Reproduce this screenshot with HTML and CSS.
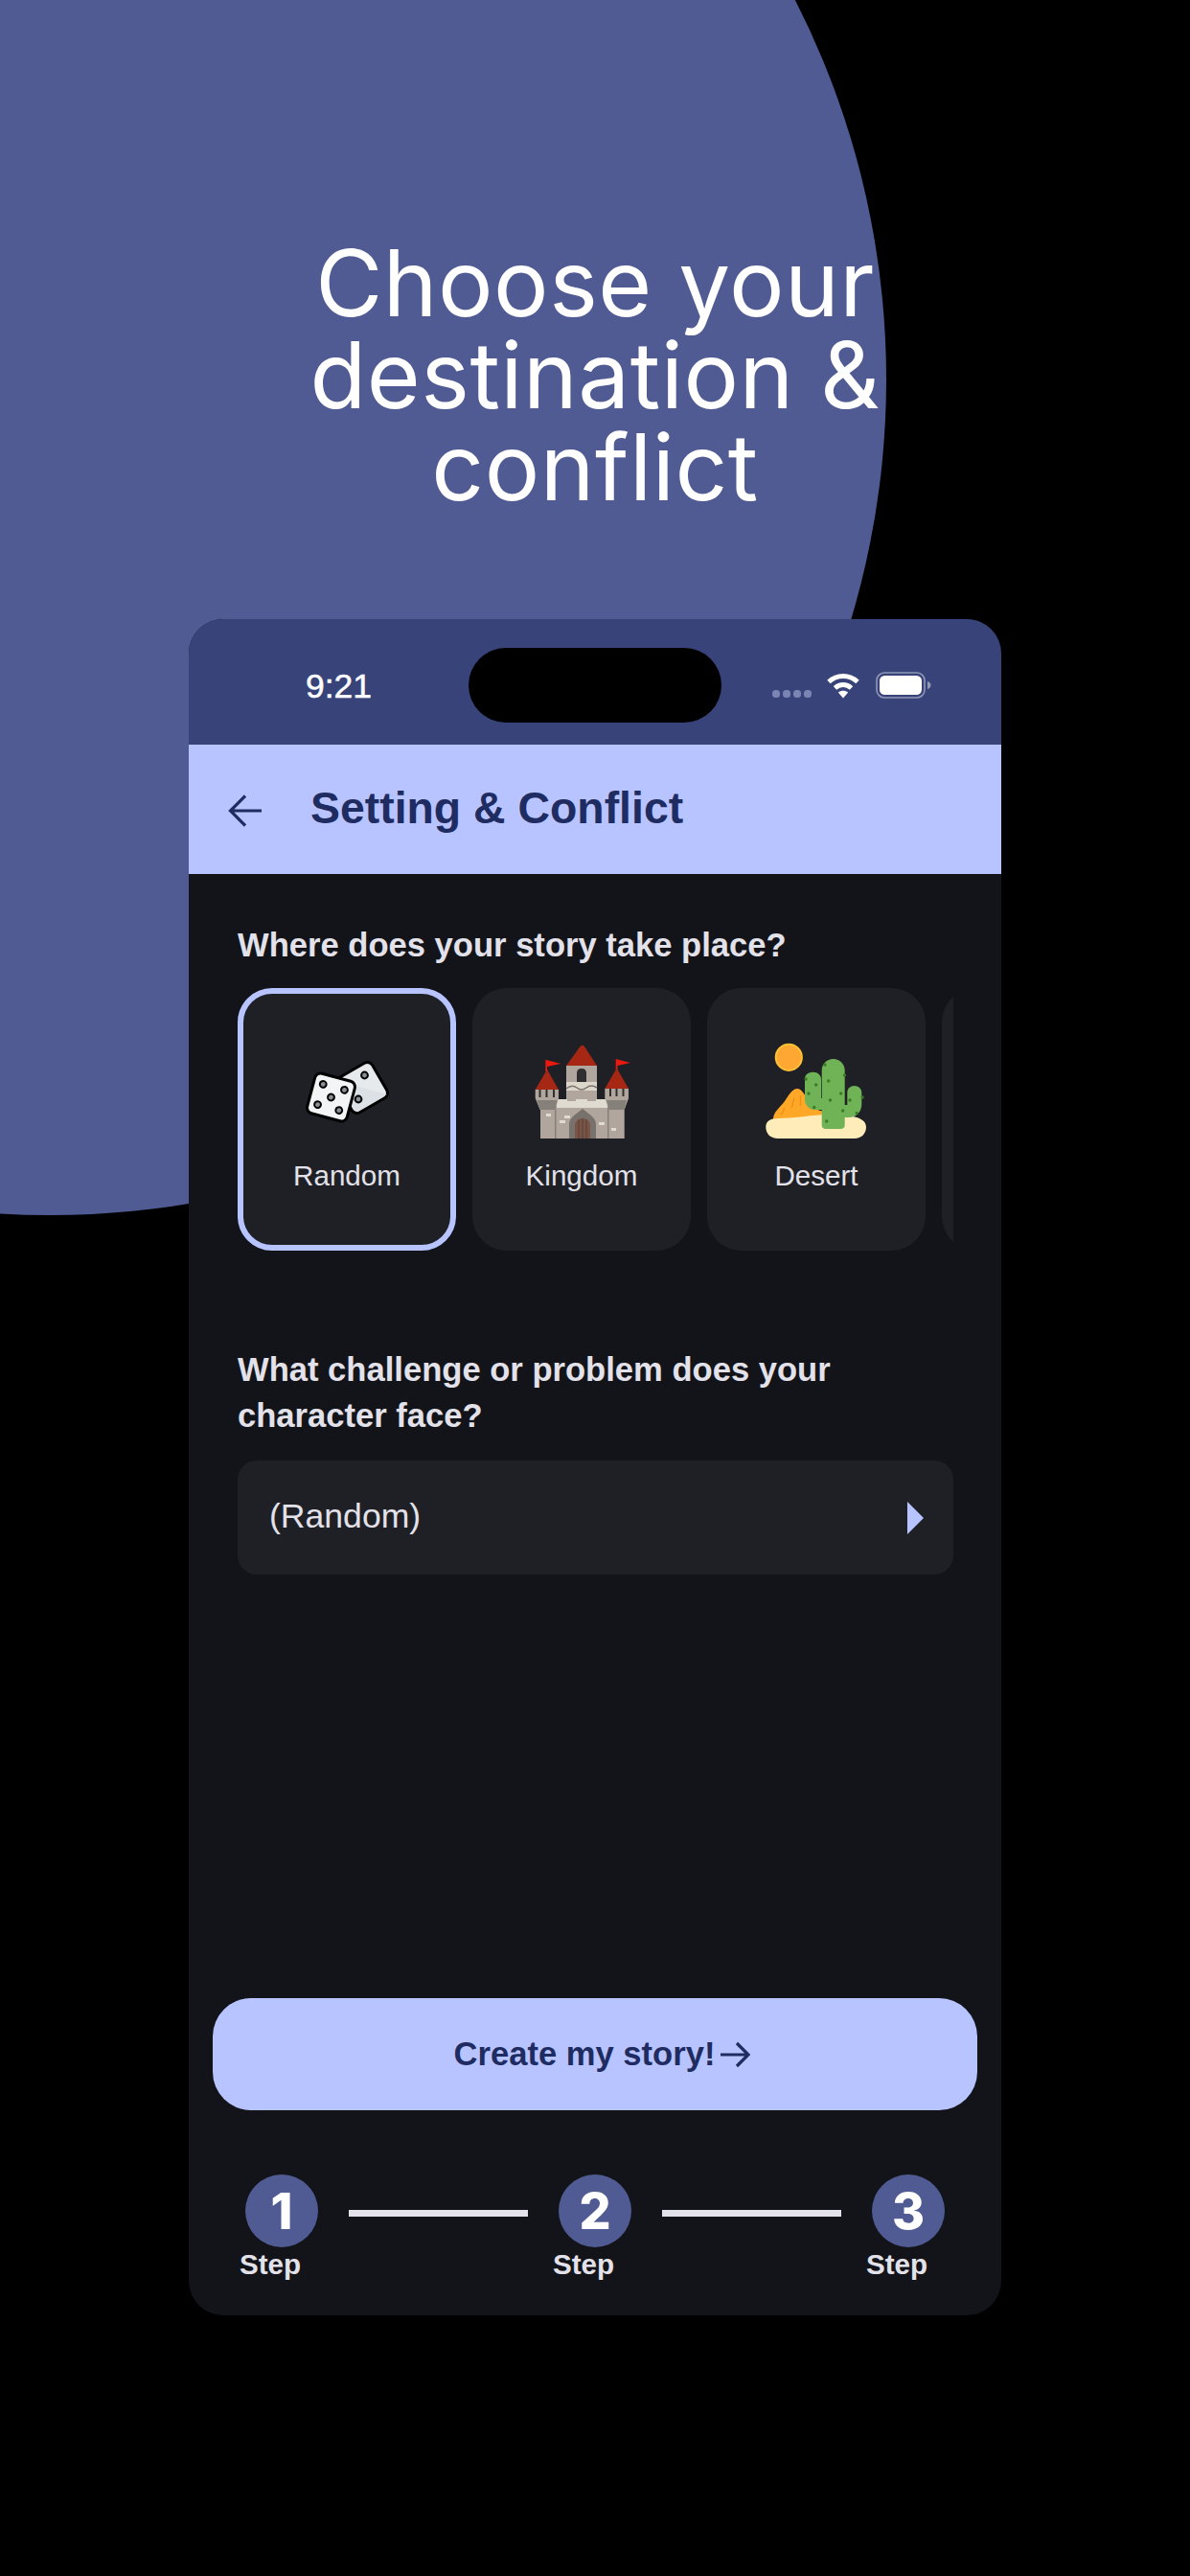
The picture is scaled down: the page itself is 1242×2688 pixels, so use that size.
FILE: index.html
```html
<!DOCTYPE html>
<html lang="en">
<head>
    <meta charset="UTF-8">
    <meta name="viewport" content="width=device-width, initial-scale=1.0">
    <title>Setting & Conflict</title>
    <link rel="stylesheet" href="styles.css">
</head>
<body>

<div class="blob"></div>

<div class="hero">
    <h1>Choose your<br>destination &amp;<br>conflict</h1>
</div>

<div class="phone">
    <div class="status">
        <span class="time">9:21</span>
        <div class="island"></div>
        <div class="status-icons">
            <svg class="dots" width="41" height="8" viewBox="0 0 41 8">
                <rect x="0" y="0" width="8" height="8" rx="3.5"/>
                <rect x="11" y="0" width="8" height="8" rx="3.5"/>
                <rect x="22" y="0" width="8" height="8" rx="3.5"/>
                <rect x="33" y="0" width="8" height="8" rx="3.5"/>
            </svg>
            <svg class="wifi" width="36" height="28" viewBox="0 0 36 28">
                <path d="M3 10.5C11.5 2.5 24.5 2.5 33 10.5" fill="none" stroke="#fff" stroke-width="5"/>
                <path d="M9.5 17C14.5 12.4 21.5 12.4 26.5 17" fill="none" stroke="#fff" stroke-width="5"/>
                <path d="M12.8 21.6C15.8 19.2 20.2 19.2 23.2 21.6L18 27.6Z" fill="#fff"/>
            </svg>
            <svg class="battery" width="58" height="28" viewBox="0 0 58 28">
                <rect x="1" y="1" width="50" height="26" rx="8" fill="none" stroke="#fff" stroke-opacity="0.45" stroke-width="1.6"/>
                <rect x="4" y="4" width="44" height="20" rx="5.5" fill="#fff"/>
                <path d="M54 10C56 10.5 57.5 12 57.5 14C57.5 16 56 17.5 54 18Z" fill="#fff" fill-opacity="0.45"/>
            </svg>
        </div>
    </div>

    <div class="topbar">
        <svg class="back" width="36" height="36" viewBox="0 0 36 36">
            <path d="M35 18H3M18 2.5L2.5 18L18 33.5" fill="none" stroke="#1f2c61" stroke-width="3.2"/>
        </svg>
        <h2>Setting &amp; Conflict</h2>
    </div>

    <div class="content">
        <p class="label">Where does your story take place?</p>
        <div class="places">
            <div class="place selected">
                <svg class="place-icon" width="120" height="120" viewBox="0 0 120 120">
                    <g transform="rotate(-30 76 55)">
                        <rect x="55" y="34" width="42" height="42" rx="6" fill="#e6eaed" stroke="#000" stroke-width="3"/>
                        <path d="M57 36L95 74H63Q57 74 57 68Z" fill="#d3dade" opacity="0.6"/>
                    </g>
                    <circle cx="78.5" cy="42" r="3.4" fill="#8a8f96" stroke="#000" stroke-width="2"/>
                    <circle cx="72" cy="67" r="3.4" fill="#8a8f96" stroke="#000" stroke-width="2"/>
                    <g transform="rotate(15 43.5 65)">
                        <rect x="22" y="43.5" width="43" height="43" rx="6" fill="#f3f4f5" stroke="#000" stroke-width="3"/>
                        <circle cx="32" cy="54" r="3.4" fill="#8a8f96" stroke="#000" stroke-width="2"/>
                        <circle cx="55" cy="54" r="3.4" fill="#8a8f96" stroke="#000" stroke-width="2"/>
                        <circle cx="43.5" cy="65" r="3.4" fill="#8a8f96" stroke="#000" stroke-width="2"/>
                        <circle cx="32" cy="76" r="3.4" fill="#8a8f96" stroke="#000" stroke-width="2"/>
                        <circle cx="55" cy="76" r="3.4" fill="#8a8f96" stroke="#000" stroke-width="2"/>
                    </g>
                </svg>
                <span>Random</span>
            </div>
            <div class="place">
                <svg class="place-icon" width="120" height="120" viewBox="0 0 120 120">
                    <rect x="44" y="32" width="32" height="40" fill="#b0a69e"/>
                    <path d="M44 32L58.5 12Q60.7 9.5 63 12L76 32Z" fill="#a52714"/>
                    <path d="M55 49V40Q55 35 60 35Q65 35 65 40V49Z" fill="#2f2f2f"/>
                    <path d="M44 49H76V58H44Z" fill="#dcd6cb"/>
                    <path d="M44 56Q50 51 55 55T65 55T76 55" fill="none" stroke="#7d7670" stroke-width="1.6"/>
                    <path d="M17 70H104.7V108H17Z" fill="#b0a69e"/>
                    <path d="M32 68H33.5V108H32ZM87 68H88.5V108H87Z" fill="#858079"/>
                    <path d="M34 67H45V69H54V67H66V69H75V67H87V76H34Z" fill="#e0dbd0"/>
                    <path d="M47 108V93C47 86 55 82 61 77C67 82 75 86 75 93V108Z" fill="#78716c"/>
                    <path d="M53 108V94C53 90 57 87 61 87C65 87 69 90 69 94V108Z" fill="#795548"/>
                    <path d="M57 88V108M61 87V108M65 88V108" stroke="#5d4037" stroke-width="1"/>
                    <path d="M11.7 57L24 36L36 57Z" fill="#a52714"/>
                    <path d="M84.3 56L96.7 34.5L109 56Z" fill="#a52714"/>
                    <path d="M11.7 57H36V66L32.5 78H16.5L11.7 66Z" fill="#b0a69e"/>
                    <path d="M84.3 56H109V66L104.7 78H88.5L84.3 66Z" fill="#b0a69e"/>
                    <path d="M13.5 68H34.5L32.5 78H16.5ZM86 68H107L104.7 78H88.5Z" fill="#858079"/>
                    <path d="M16.5 57V65M23.5 57V65M31 57V65M90 56V64M96.5 56V64M103.5 56V64" stroke="#2f2f2f" stroke-width="2"/>
                    <path d="M22.3 25.7L38.3 30L24 33L24 38H22.3Z" fill="#e8190f"/>
                    <path d="M95.7 25L111 29L97.5 32L97.5 36H95.7Z" fill="#e8190f"/>
                    <path d="M23 82H28V85H23ZM42 84H48V87H42ZM37 89H43V92H37ZM78 91H84V94H78ZM91 97H96V100H91Z" fill="#e0dbd0"/>
                </svg>
                <span>Kingdom</span>
            </div>
            <div class="place">
                <svg class="place-icon" width="120" height="120" viewBox="0 0 120 120">
                    <circle cx="31.3" cy="23.3" r="13.6" fill="#ffa733" stroke="#fdc136" stroke-width="2"/>
                    <path d="M15 88C15 80 22 76 27 69C31 63 35 56 40 56C45 56 49 64 53 71C56 76 61 79 70 80L70 90H15Z" fill="#ffa726"/>
                    <path d="M37 66C35 70 36 73 34 76M44 63C42 68 45 70 43 74M27 76C26 79 25 81 23 83" fill="none" stroke="#f18f1b" stroke-width="1.4"/>
                    <path d="M7.3 96C7.3 90 12 87 20 87C35 87 50 84 70 83C90 83 112 84 112 96C112 103 107 108 100 108H20C12 108 7.3 103 7.3 96Z" fill="#ffecb8"/>
                    <path d="M65.7 37C65.7 30 71 25 77.7 25C84.4 25 89.7 30 89.7 37V94Q89.7 98 85 98H70Q65.7 98 65.7 94V78H59C52 78 48 73 48 67V46C48 41 52 38.7 56.8 38.7C61.6 38.7 65 42 65 46V66H65.7Z" fill="#6fb356"/>
                    <path d="M89 73H92.3V60C92.3 56 95.5 53 99.7 53C104 53 107.3 56 107.3 60V72C107.3 80 102 86 94 86H89Z" fill="#6fb356"/>
                    <g fill="#3c7a28">
                        <circle cx="69" cy="31" r="1.7"/><circle cx="89.5" cy="42" r="1.7"/><circle cx="49" cy="46" r="1.7"/>
                        <circle cx="59.7" cy="52" r="1.7"/><circle cx="72.7" cy="48" r="1.7"/><circle cx="52" cy="61" r="1.7"/>
                        <circle cx="85.7" cy="61" r="1.7"/><circle cx="74.5" cy="68" r="1.7"/><circle cx="95" cy="68" r="1.7"/>
                        <circle cx="108" cy="65" r="1.7"/><circle cx="57.7" cy="75.5" r="1.7"/><circle cx="87.7" cy="79" r="1.7"/>
                        <circle cx="102.3" cy="81.5" r="1.7"/><circle cx="70.7" cy="90" r="1.7"/>
                    </g>
                </svg>
                <span>Desert</span>
            </div>
            <div class="place"></div>
        </div>

        <p class="label second">What challenge or problem does your<br>character face?</p>
        <div class="picker">
            <span>(Random)</span>
            <div class="picker-arrow"></div>
        </div>

        <button class="create" type="button">
            <span>Create my story!</span>
            <svg width="33" height="30" viewBox="0 0 33 30">
                <path d="M1 15H30M18 3L30 15L18 27" fill="none" stroke="#1f2c61" stroke-width="3.2"/>
            </svg>
        </button>

        <div class="steps">
            <div class="step">
                <div class="step-num">1</div>
                <span class="step-label">Step</span>
            </div>
            <div class="step-line"></div>
            <div class="step">
                <div class="step-num">2</div>
                <span class="step-label">Step</span>
            </div>
            <div class="step-line"></div>
            <div class="step">
                <div class="step-num">3</div>
                <span class="step-label">Step</span>
            </div>
        </div>
    </div>
</div>

</body>
</html>
```

FILE: styles.css
```css
* {
    box-sizing: border-box;
    margin: 0;
    padding: 0;
}
html, body {
    height: 2688px;
    overflow: hidden;
}
body {
    position: relative;
    background: #000;
    font-family: "Liberation Sans", Arial, sans-serif;
    color: #e3e1e9;
}
.blob {
    position: absolute;
    left: -819px;
    top: -476px;
    width: 1744px;
    height: 1744px;
    border-radius: 50%;
    background: #4f5b92;
}
.hero {
    position: relative;
    height: 646px;
    padding-top: 247px;
    text-align: center;
}
.hero h1 {
    font-family: Inter, sans-serif;
    font-weight: 400;
    font-size: 96px;
    line-height: 96px;
    letter-spacing: 0.5px;
    color: #fff;
}
.phone {
    position: relative;
    display: flex;
    flex-direction: column;
    width: 848px;
    height: 1770px;
    margin: 0 auto;
    background: #121419;
    border-radius: 36px;
    overflow: hidden;
}
.status {
    display: flex;
    align-items: center;
    height: 131px;
    padding: 30px 0 23px 122px;
    background: #374379;
}
.time {
    width: 170px;
    padding-top: 2px;
    font-size: 35.5px;
    color: #fff;
    -webkit-text-stroke: 0.5px #fff;
}
.island {
    width: 264px;
    height: 78px;
    background: #000;
    border-radius: 39px;
}
.status-icons {
    display: flex;
    align-items: center;
    margin-left: 53px;
}
.dots {
    margin: 18px 15px 0 0;
    fill: #7b85b3;
}
.battery {
    margin-left: 16px;
}
.topbar {
    display: flex;
    align-items: center;
    height: 135px;
    padding-left: 41px;
    background: #b8c4ff;
}
.back {
    margin: 2px 50px 0 0;
}
.topbar h2 {
    margin-bottom: 4px;
    font-size: 46.4px;
    font-weight: 700;
    color: #1f2c61;
}
.content {
    display: flex;
    flex-direction: column;
    flex: 1;
    padding-top: 50px;
}
.label {
    margin: 0 51px;
    font-size: 34.6px;
    font-weight: 700;
    line-height: 48px;
}
.second {
    margin-top: 100px;
}
.places {
    display: flex;
    gap: 17px;
    width: 747px;
    margin: 21px 0 0 51px;
    overflow: hidden;
}
.place {
    display: flex;
    flex-direction: column;
    align-items: center;
    flex: none;
    width: 228px;
    height: 274px;
    padding-top: 43px;
    background: #1e2026;
    border: 6px solid #1e2026;
    border-radius: 36px;
    font-size: 29.6px;
}
.place.selected {
    border-color: #b8c4ff;
}
.place-icon {
    flex: none;
}
.place span {
    margin-top: 10px;
}
.picker {
    display: flex;
    align-items: center;
    justify-content: space-between;
    height: 119px;
    margin: 23px 50px 0 51px;
    padding: 0 31px 0 33px;
    background: #1e2026;
    border-radius: 20px;
    font-size: 35.6px;
}
.picker span {
    margin-bottom: 3px;
}
.picker-arrow {
    width: 0;
    height: 0;
    border-left: 17px solid #b8c4ff;
    border-top: 17px solid transparent;
    border-bottom: 17px solid transparent;
}
.create {
    display: flex;
    align-items: center;
    justify-content: center;
    gap: 5px;
    height: 117px;
    margin: auto 25px 0;
    padding-left: 16px;
    background: #b8c4ff;
    border: none;
    border-radius: 40px;
    font-family: "Liberation Sans", Arial, sans-serif;
    font-size: 34.6px;
    font-weight: 700;
    color: #1f2c61;
}
.steps {
    display: flex;
    gap: 32px;
    align-items: flex-start;
    height: 214px;
    padding: 67px 59px 0;
}
.step {
    display: flex;
    flex-direction: column;
    flex: none;
    width: 76px;
}
.step-num {
    display: flex;
    align-items: center;
    justify-content: center;
    width: 76px;
    height: 76px;
    background: #4f5b92;
    border-radius: 50%;
    font-family: Inter, sans-serif;
    font-size: 52px;
    font-weight: 800;
    color: #fff;
}
.step-label {
    margin: 0 0 0 -6px;
    font-size: 29.6px;
    font-weight: 700;
    line-height: 36px;
}
.step-line {
    flex: 1;
    height: 7px;
    margin-top: 37px;
    background: #e3e1e9;
}
```
